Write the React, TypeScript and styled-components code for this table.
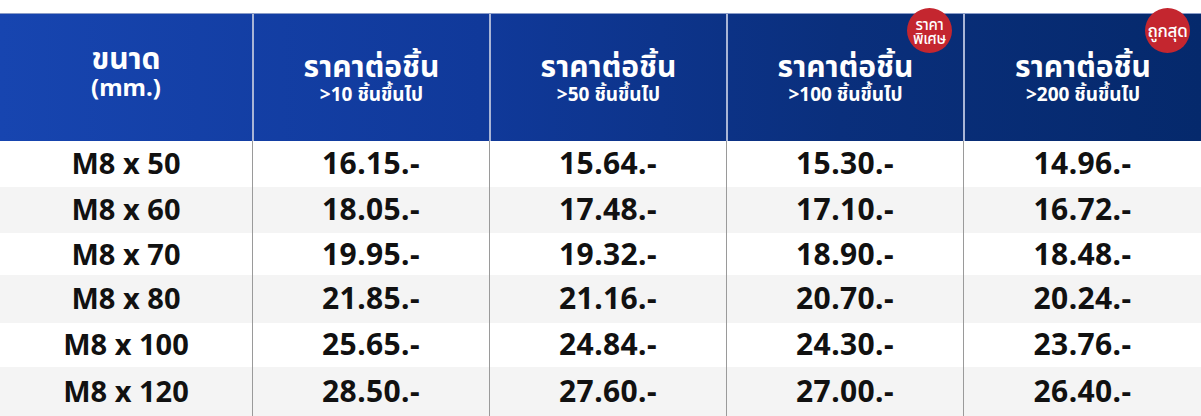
import React from 'react'
import styled, { createGlobalStyle } from 'styled-components'

const GlobalStyle = createGlobalStyle`
    html, body { margin: 0; padding: 0; background: #fff; }
    body { font-family: "Noto Sans", "Noto Sans Thai", "Liberation Sans", sans-serif; }
`

interface Tier {
    qty: string
    badge?: string[]
}

const tiers: Tier[] = [
    { qty: '>10' },
    { qty: '>50' },
    { qty: '>100', badge: ['ราคา', 'พิเศษ'] },
    { qty: '>200', badge: ['ถูกสุด'] },
]

const rows: { size: string, prices: string[], h: number }[] = [
    { size: 'M8 x 50', prices: ['16.15', '15.64', '15.30', '14.96'], h: 46 },
    { size: 'M8 x 60', prices: ['18.05', '17.48', '17.10', '16.72'], h: 46 },
    { size: 'M8 x 70', prices: ['19.95', '19.32', '18.90', '18.48'], h: 42 },
    { size: 'M8 x 80', prices: ['21.85', '21.16', '20.70', '20.24'], h: 48 },
    { size: 'M8 x 100', prices: ['25.65', '24.84', '24.30', '23.76'], h: 44 },
    { size: 'M8 x 120', prices: ['28.50', '27.60', '27.00', '26.40'], h: 49 },
]

export default function App() {
    return (
        <>
            <GlobalStyle />
            <Page>
                <Table>
                    <Head>
                        <HeadCell $lift>
                            <Title>ขนาด</Title>
                            <Unit>(mm.)</Unit>
                        </HeadCell>
                        {tiers.map((t) => (
                            <HeadCell key={t.qty}>
                                <Title>ราคาต่อชิ้น</Title>
                                <Sub>{t.qty} ชิ้นขึ้นไป</Sub>
                                {t.badge ? (
                                    <Badge $small={t.badge.length > 1}>
                                        {t.badge.map((l) => <span key={l}>{l}</span>)}
                                    </Badge>
                                ) : null}
                            </HeadCell>
                        ))}
                    </Head>
                    {rows.map((r, i) => (
                        <Row key={r.size} $alt={i % 2 === 1} style={{ height: r.h }}>
                            <Cell>{r.size}</Cell>
                            {r.prices.map((p, j) => <Cell key={j} $price>{p}.-</Cell>)}
                        </Row>
                    ))}
                </Table>
            </Page>
        </>
    )
}

const Page = styled.div`
    width: 1201px;
    height: 416px;
    padding-top: 13px;
    box-sizing: border-box;
    overflow: hidden;
`

const Table = styled.div`
    display: flex;
    flex-direction: column;
`

const Head = styled.div`
    display: grid;
    grid-template-columns: 252px 237px 237px 237px 238px;
    height: 128px;
    box-sizing: border-box;
    border-top: 1px solid #8a9cc8;
    background: linear-gradient(90deg, #1745b0 0%, #10399a 40%, #0a2f7c 70%, #05296c 100%);
`

const HeadCell = styled.div<{ $lift?: boolean }>`
    position: relative;
    display: flex;
    flex-direction: column;
    align-items: center;
    justify-content: center;
    padding-bottom: ${(p) => (p.$lift ? '14px' : '0')};
    color: #fff;
    font-weight: 700;
    & + & {
        border-left: 2px solid #a9b5d6;
    }
`

const Title = styled.div`
    font-size: 30px;
    line-height: 32px;
`

const Unit = styled.div`
    font-size: 24px;
    line-height: 26px;
`

const Sub = styled.div`
    font-size: 19px;
    line-height: 24px;
`

const Badge = styled.div<{ $small: boolean }>`
    position: absolute;
    top: -6px;
    right: 11px;
    width: 45px;
    height: 45px;
    border-radius: 50%;
    background: #c4262f;
    display: flex;
    flex-direction: column;
    align-items: center;
    justify-content: center;
    font-size: ${(p) => (p.$small ? '15px' : '17px')};
    line-height: ${(p) => (p.$small ? '14px' : '18px')};
    font-weight: 500;
    letter-spacing: -0.3px;
`

const Row = styled.div<{ $alt: boolean }>`
    display: grid;
    grid-template-columns: 252px 237px 237px 237px 238px;
    background: ${(p) => (p.$alt ? '#f4f4f4' : '#fff')};
`

const Cell = styled.div<{ $price?: boolean }>`
    display: flex;
    align-items: center;
    justify-content: center;
    padding-bottom: 3px;
    font-size: ${(p) => (p.$price ? '30px' : '29px')};
    letter-spacing: ${(p) => (p.$price ? '0.4px' : '0')};
    font-weight: 700;
    color: #111;
    & + & {
        border-left: 1px solid #9a9a9a;
    }
`
